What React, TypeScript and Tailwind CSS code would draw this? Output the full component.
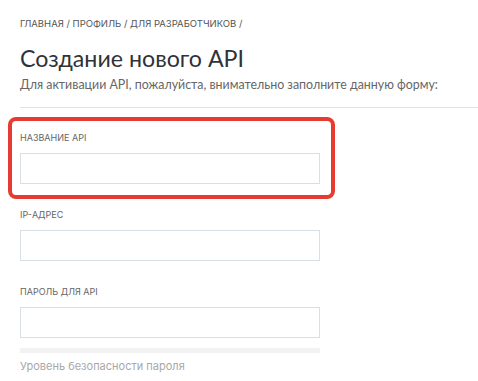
import React from "react";

const fields = [
  { label: "Название API", highlight: true },
  { label: "IP-адрес", highlight: false },
  { label: "Пароль для API", highlight: false },
];

export default function App() {
  return (
    <div
      className="relative w-[478px] h-[381px] overflow-hidden bg-white text-[#333]"
      style={{ fontFamily: "Inter, 'Noto Sans', sans-serif" }}
    >
      <div className="pl-5 pt-[18px]">
        {/* хлебные крошки */}
        <div className="h-3 text-[9.5px] leading-3 uppercase text-[#555]">
          Главная / Профиль / Для разработчиков /
        </div>
        <h1 className="mt-[14px] h-7 font-['Lato',sans-serif] text-[23.2px] leading-7 text-[#2f3338]">
          Создание нового API
        </h1>
        <p className="mt-[3px] h-5 font-['Lato',sans-serif] text-[12.4px] leading-5 text-[#666]">
          Для активации API, пожалуйста, внимательно заполните данную форму:
        </p>
        <div className="mt-[12px] h-px bg-[#dfe4e8]" />

        {/* форма */}
        <div className="mt-[24px] flex flex-col">
          {fields.map((f, i) => (
            <div key={i} className={i > 0 ? "mt-[25px]" : ""}>
              <div className="h-3 text-[9px] leading-3 uppercase text-[#666]">
                {f.label}
              </div>
              <div className="mt-[9px] w-[300px] h-[31px] border border-[#d8dfe5] bg-white" />
            </div>
          ))}
          <div className="mt-[10px] w-[300px] h-[5px] bg-[#f2f2f2]" />
          <div className="mt-[5px] text-[11px] leading-4 text-[#a8a8a8]">
            Уровень безопасности пароля
          </div>
        </div>
      </div>

      {/* выделение поля */}
      <div className="absolute left-[8px] top-[117px] w-[327px] h-[82px] border-[4px] border-[#e53b30] rounded-[8px]" />
    </div>
  );
}
